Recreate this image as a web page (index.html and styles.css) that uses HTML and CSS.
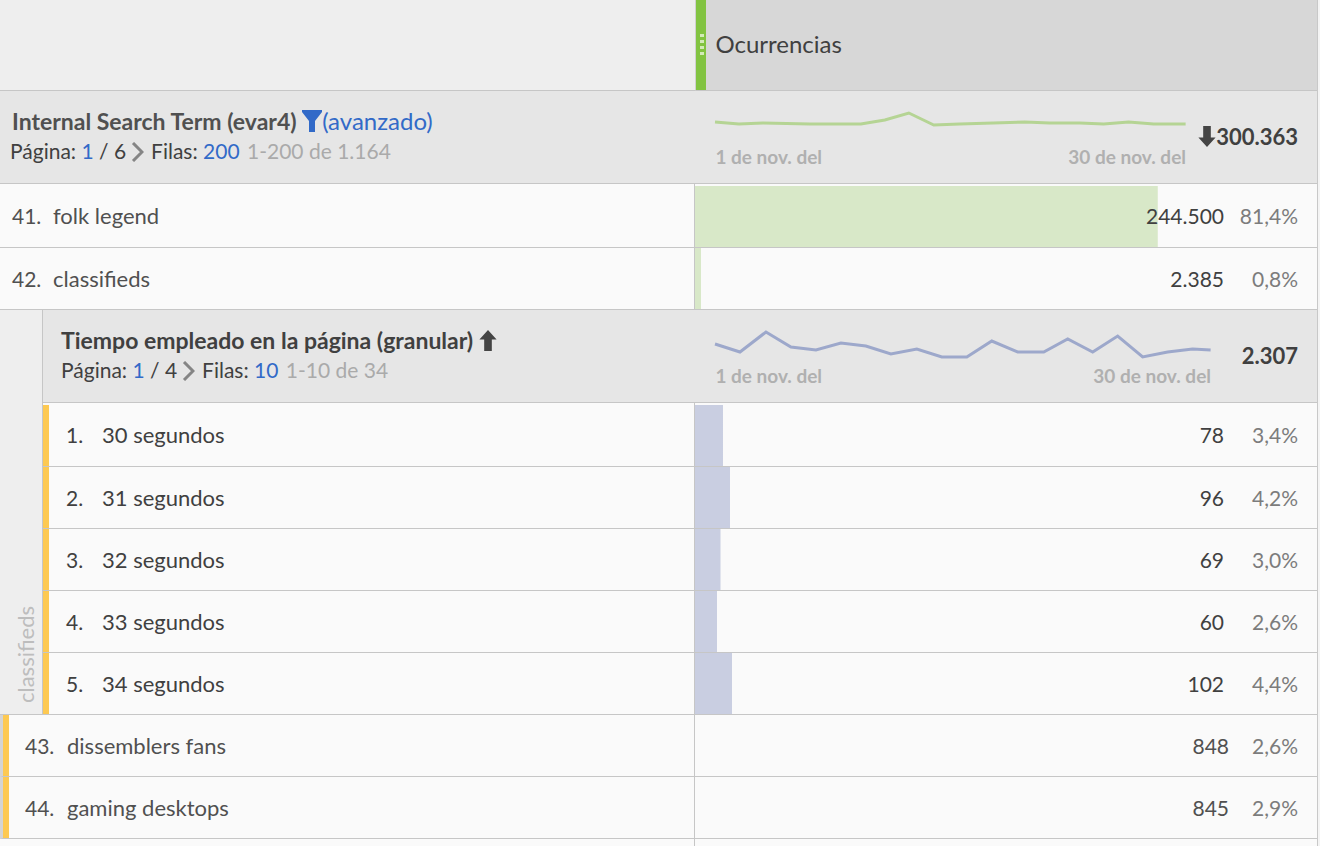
FILE: index.html
```
<!DOCTYPE html>
<html lang="es">
<head>
<meta charset="utf-8">
<title>Ocurrencias</title>
<link rel="stylesheet" href="styles.css">
</head>
<body>
<table class="report">
  <colgroup><col class="col-rail"><col><col class="col-metric"></colgroup>
  <thead>
    <tr class="top">
      <td colspan="2" class="corner"></td>
      <th scope="col" class="metric-head">
        <div class="metric-title">
          <svg class="grip" viewBox="0 0 10 90" aria-hidden="true"><path d="M4 34h4v3H4zM4 40h4v3H4zM4 46h4v3H4zM4 52h4v3H4z"/></svg>
          <span>Ocurrencias</span>
        </div>
      </th>
    </tr>
  </thead>
  <tbody>
    <tr class="group">
      <th colspan="2" scope="rowgroup" class="dim">
        <div class="group-title soft"><span>Internal Search Term (evar4)</span>
          <a href="#" class="filter"><svg class="funnel" viewBox="0 0 20 22" aria-hidden="true"><path d="M0 0h20v2l-7 9v11H7V11L0 2z"/></svg>(avanzado)</a></div>
        <div class="pager main-pager">Página: <a href="#">1</a> / 6<button type="button" class="next" aria-label="Página siguiente"><svg viewBox="0 0 13 20"><path d="M2 1l9 9-9 9"/></svg></button>Filas: <a href="#">200</a> <span class="range">1-200 de 1.164</span></div>
      </th>
      <td class="summary">
        <div class="summary-row">
          <div class="trend">
            <svg class="spark green" viewBox="0 0 471 32" preserveAspectRatio="none" aria-hidden="true"><polyline points="0,14 24,16 48,15 95,16 146,16 170,12 194,5 219,17 245,16 310,14 335,15 365,15 389,16 414,14 439,16 471,16"/></svg>
            <div class="dates"><span>1 de nov. del</span><span>30 de nov. del</span></div>
          </div>
          <strong class="total wide"><svg class="arrow" viewBox="0 0 18 22" aria-hidden="true"><path d="M5 0h8v12h5l-9 10-9-10h5z"/></svg>300.363</strong>
        </div>
      </td>
    </tr>
    <tr class="item first">
      <th colspan="2" scope="row" class="dim"><div class="entry soft"><span class="rank">41.</span>folk legend</div></th>
      <td class="metric green-bar" style="--bar: 74.4%"><div class="figures"><span>244.500</span><span class="pct">81,4%</span></div></td>
    </tr>
    <tr class="item">
      <th colspan="2" scope="row" class="dim"><div class="entry soft"><span class="rank">42.</span>classifieds</div></th>
      <td class="metric green-bar" style="--bar: 1%"><div class="figures"><span>2.385</span><span class="pct">0,8%</span></div></td>
    </tr>
    <tr class="group">
      <th rowspan="6" scope="rowgroup" class="rail"><span>classifieds</span></th>
      <th scope="rowgroup" class="dim nested-head">
        <div class="group-title"><span>Tiempo empleado en la página (granular)</span> <svg class="arrow" viewBox="0 0 18 22" aria-hidden="true"><path d="M5 22h8V10h5L9 0 0 10h5z"/></svg></div>
        <div class="pager">Página: <a href="#">1</a> / 4<button type="button" class="next" aria-label="Página siguiente"><svg viewBox="0 0 13 20"><path d="M2 1l9 9-9 9"/></svg></button>Filas: <a href="#">10</a> <span class="range">1-10 de 34</span></div>
      </th>
      <td class="summary">
        <div class="summary-row">
          <div class="trend">
            <svg class="spark blue" viewBox="0 0 496 32" preserveAspectRatio="none" aria-hidden="true"><polyline points="0,17 25,25 51,5 76,20 101,23 126,16 151,19 176,27 202,22 227,30 252,30 277,14 303,25 329,25 353,12 378,25 403,9 428,30 453,25 478,22 496,23"/></svg>
            <div class="dates"><span>1 de nov. del</span><span>30 de nov. del</span></div>
          </div>
          <strong class="total">2.307</strong>
        </div>
      </td>
    </tr>
    <tr class="item first nested">
      <th scope="row" class="dim"><div class="entry"><span class="rank">1.</span>30 segundos</div></th>
      <td class="metric blue-bar" style="--bar: 4.5%"><div class="figures"><span>78</span><span class="pct">3,4%</span></div></td>
    </tr>
    <tr class="item nested">
      <th scope="row" class="dim"><div class="entry"><span class="rank">2.</span>31 segundos</div></th>
      <td class="metric blue-bar" style="--bar: 5.7%"><div class="figures"><span>96</span><span class="pct">4,2%</span></div></td>
    </tr>
    <tr class="item nested">
      <th scope="row" class="dim"><div class="entry"><span class="rank">3.</span>32 segundos</div></th>
      <td class="metric blue-bar" style="--bar: 4.1%"><div class="figures"><span>69</span><span class="pct">3,0%</span></div></td>
    </tr>
    <tr class="item nested">
      <th scope="row" class="dim"><div class="entry"><span class="rank">4.</span>33 segundos</div></th>
      <td class="metric blue-bar" style="--bar: 3.6%"><div class="figures"><span>60</span><span class="pct">2,6%</span></div></td>
    </tr>
    <tr class="item nested">
      <th scope="row" class="dim"><div class="entry"><span class="rank">5.</span>34 segundos</div></th>
      <td class="metric blue-bar" style="--bar: 6%"><div class="figures"><span>102</span><span class="pct">4,4%</span></div></td>
    </tr>
    <tr class="item marked">
      <th colspan="2" scope="row" class="dim"><div class="entry soft"><span class="rank">43.</span>dissemblers fans</div></th>
      <td class="metric"><div class="figures close"><span class="soft">848</span><span class="pct">2,6%</span></div></td>
    </tr>
    <tr class="item marked">
      <th colspan="2" scope="row" class="dim"><div class="entry soft"><span class="rank">44.</span>gaming desktops</div></th>
      <td class="metric"><div class="figures close"><span class="soft">845</span><span class="pct">2,9%</span></div></td>
    </tr>
    <tr class="tail">
      <td colspan="2" class="dim"></td>
      <td class="metric"></td>
    </tr>
  </tbody>
</table>
</body>
</html>
```
FILE: styles.css
```
* { box-sizing: border-box; }
body {
  margin: 0;
  padding-right: 2px;
  background: #f4f4f4;
  color: #404040;
  font: 22px/30px Lato, "Open Sans", sans-serif;
}
a { color: #326ac8; text-decoration: none; }
.report {
  width: 100%;
  table-layout: fixed;
  border-collapse: separate;
  border-spacing: 0;
  border-right: 1px solid #c8c8c8;
}
.col-rail { width: 43px; }
.col-metric { width: 47.2%; }
td, th {
  padding: 0;
  border-bottom: 1px solid #c6c6c6;
  font-weight: 400;
  text-align: left;
  vertical-align: middle;
}

.top > * { height: 91px; }
.corner { background: #eee; }
.metric-head { border-left: 1px solid #d0d0d0; background: #d7d7d7; }
.metric-title {
  display: flex;
  align-items: center;
  gap: 9px;
  height: 90px;
  font-size: 24px;
}
.metric-title span { padding-bottom: 2px; }
.grip { width: 10px; height: 90px; background: #82c341; }
.grip path { fill: #d3eab9; }

.group > * { height: 93px; background: #e6e6e6; }
.group .dim { padding: 15px 12px 16px; vertical-align: top; }
.group .nested-head { padding-left: 18px; }
.group-title { font-size: 23px; font-weight: 700; }
.filter { font-weight: 400; font-size: 24px; }
.funnel { width: 20px; height: 22px; fill: #326ac8; vertical-align: -2px; }
.arrow { width: 18px; height: 21px; fill: #444; vertical-align: -2px; }
.pager { font-size: 21px; }
.next {
  padding: 0 7px 0 5px;
  border: 0;
  background: none;
  line-height: 20px;
  vertical-align: -3px;
}
.next svg {
  display: block;
  width: 13px;
  height: 20px;
  fill: none;
  stroke: #858585;
  stroke-width: 3;
}
.pager .range { margin-left: 2px; color: #aaa; }
.main-pager { margin-left: -2px; }

.summary-row { display: flex; padding: 16px 19px 8px 20px; align-items: center; }
.trend { flex: 1; }
.spark { display: block; width: 100%; height: 32px; fill: none; stroke-width: 3; overflow: visible; }
.spark polyline { vector-effect: non-scaling-stroke; }
.green { stroke: #b5d494; }
.blue { stroke: #9da8cb; }
.dates {
  display: flex;
  justify-content: space-between;
  color: #b0b0b0;
  font-size: 19px;
  font-weight: 700;
  line-height: 34px;
}
.total { width: 87px; padding-bottom: 9px; text-align: right; white-space: nowrap; }
.total.wide { width: 112px; }

.item > * { height: 62px; background-color: #fafafa; }
.item.first > * { height: 64px; }
.item .dim, .tail .dim { border-right: 1px solid #c6c6c6; }
.entry { display: flex; align-items: baseline; padding-left: 12px; }
.rank { width: 41px; font-size: 21px; }
.nested .dim, .marked .dim {
  background-image: linear-gradient(#fdc952, #fdc952);
  background-position: left bottom;
  background-repeat: no-repeat;
  background-size: 6px 100%;
}
.nested.first .dim { background-size: 6px calc(100% - 2px); }
.nested .entry { padding-left: 23px; }
.nested .rank { width: 36px; }
.marked .dim { border-left: 3px solid #d4d4d4; }
.marked .entry { padding-left: 22px; }
.marked .rank { width: 42px; }
.soft { color: #505050; }

.metric {
  --bar: 0%;
  --tint: transparent;
  background-image: linear-gradient(var(--tint), var(--tint));
  background-position: left bottom;
  background-repeat: no-repeat;
  background-size: var(--bar) 100%;
}
.first .metric { background-size: var(--bar) calc(100% - 2px); }
.green-bar { --tint: #d8e8c8; }
.blue-bar { --tint: #c9cee1; }
.figures { display: flex; justify-content: flex-end; padding-right: 19px; font-size: 21px; }
.pct { width: 74px; color: #7c7c7c; text-align: right; }
.close .pct { width: 69px; }

.group .rail {
  background: #eee;
  border-right: 1px solid #c6c6c6;
  vertical-align: bottom;
}
.rail span {
  display: block;
  margin: 0 0 11px 11px;
  color: #bdbdbd;
  writing-mode: vertical-rl;
  transform: rotate(180deg);
}
.tail > * { height: 7px; border-bottom: 0; background-color: #fafafa; }
```
